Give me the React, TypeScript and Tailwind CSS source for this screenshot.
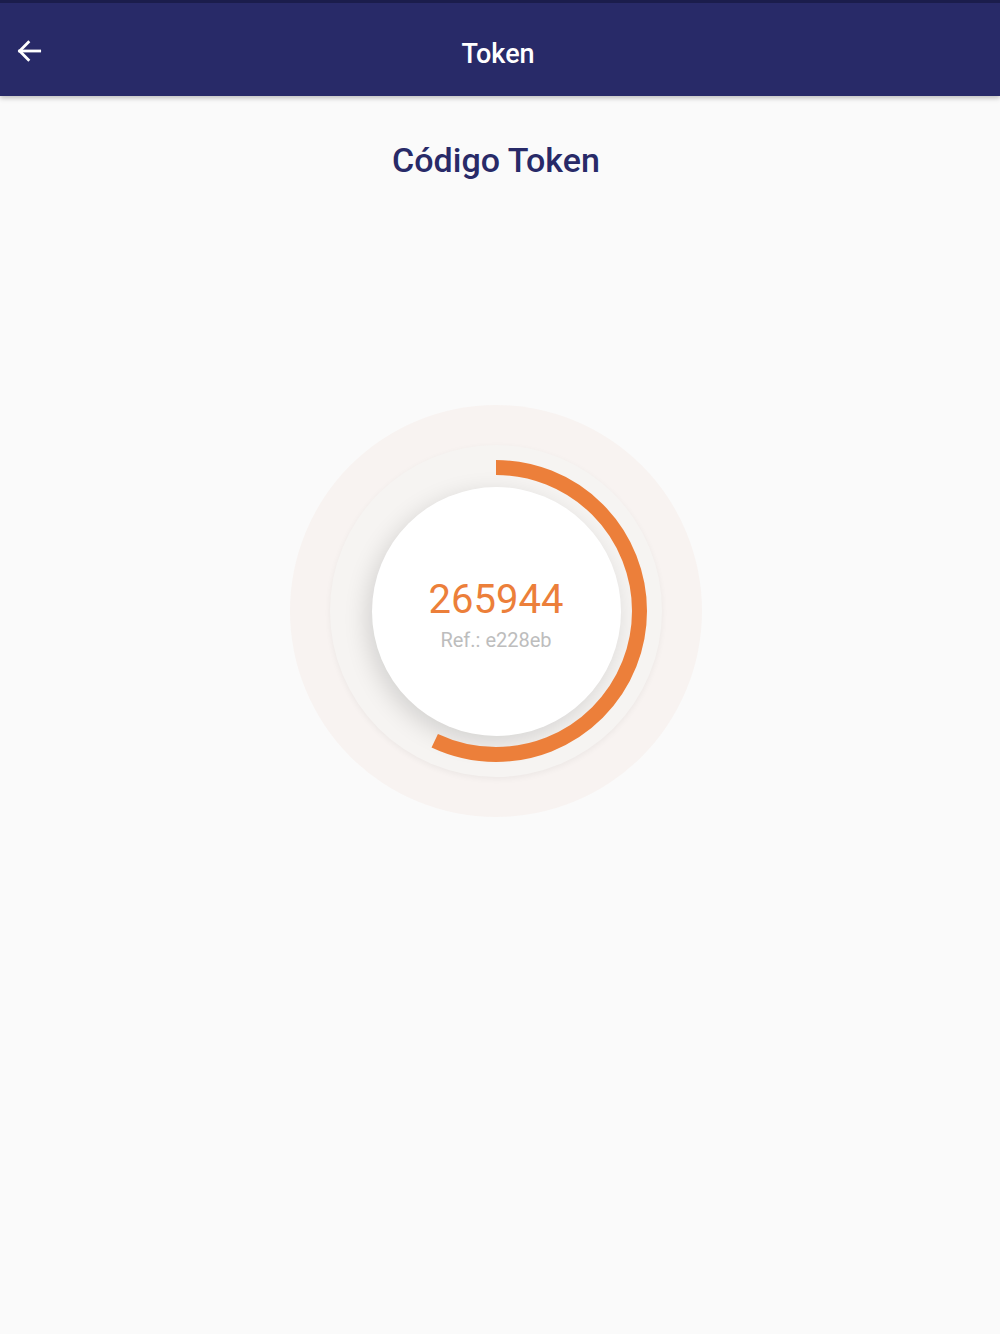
import React from "react";

export default function App() {
  const r = 143.5;
  const c = 2 * Math.PI * r;
  const dash = c * 0.57;
  return (
    <div className="min-h-[1334px] w-full bg-[#fafafa] flex flex-col items-center" style={{ fontFamily: "Roboto, 'Noto Sans', sans-serif" }}>
      <header className="w-full h-[96px] bg-[#282a68] border-t-[3px] border-[#1b1d4c] shadow-[0_2px_5px_rgba(0,0,0,0.25)] relative flex items-center justify-center z-10">
        <button className="absolute left-[12px] top-[31px] w-[34px] h-[34px] flex items-center justify-center">
          <svg width="32" height="32" viewBox="0 0 24 24" fill="none" stroke="white" strokeWidth="2.1" strokeLinecap="square">
            <path d="M20 12H5" />
            <path d="M11.5 5.5L5 12l6.5 6.5" />
          </svg>
        </button>
        <h1 className="text-white text-[27px] font-medium leading-none mt-[10px] pr-[4px]">Token</h1>
      </header>
      <div className="w-full flex flex-col items-center pr-[8px]">
        <h2 className="mt-[44px] text-[#282a68] text-[34px] leading-[40px] font-medium">Código Token</h2>
        <div className="mt-[225px] w-[412px] h-[412px] rounded-full bg-[#f8f3f1] flex items-center justify-center relative">
          <div className="w-[332px] h-[332px] rounded-full bg-[#f6f4f2] shadow-[0_2px_6px_rgba(0,0,0,0.05)] flex items-center justify-center">
            <div className="w-[249px] h-[249px] rounded-full bg-white shadow-[-5px_7px_24px_rgba(0,0,0,0.14)] flex flex-col items-center justify-center">
              <div className="text-[#ec7f3a] text-[40px] leading-[48px] mt-[6px]">265944</div>
              <div className="text-[#bdbdbd] text-[20px] leading-[24px] mt-[4px]">Ref.: e228eb</div>
            </div>
          </div>
          <svg className="absolute left-0 top-0" width="412" height="412" viewBox="0 0 412 412">
            <circle
              cx="206"
              cy="206"
              r={r}
              fill="none"
              stroke="#ec7f3a"
              strokeWidth="15"
              strokeDasharray={`${dash} ${c}`}
              transform="rotate(-90 206 206)"
            />
          </svg>
        </div>
      </div>
    </div>
  );
}
